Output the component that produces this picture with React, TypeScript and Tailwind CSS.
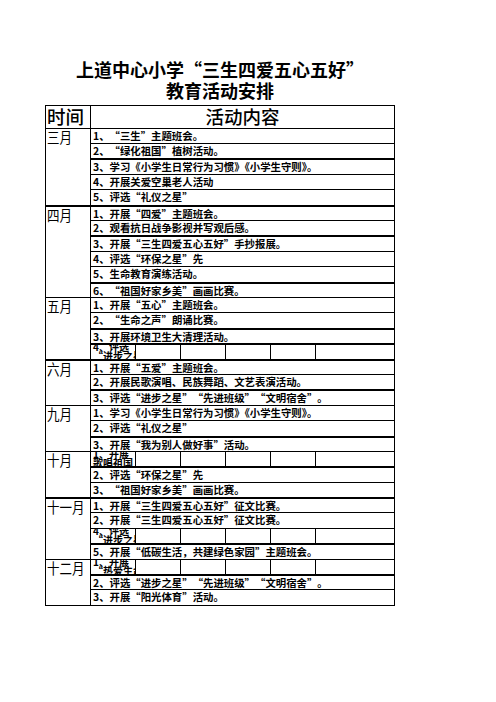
import React from 'react';

// ---------------------------------------------------------------------------
// Data
// ---------------------------------------------------------------------------

type Row = { text?: string; split?: [string, string]; thick?: boolean };
type Month = { label: string; thick?: boolean; rows: Row[] };

const MONTHS: Month[] = [
  {
    label: '三月',
    rows: [
      { text: '1、“三生”主题班会。' },
      { text: '2、“绿化祖国”植树活动。' },
      { text: '3、学习《小学生日常行为习惯》《小学生守则》。', thick: true },
      { text: '4、开展关爱空巢老人活动' },
      { text: '5、评选“礼仪之星”' },
    ],
  },
  {
    label: '四月',
    thick: true,
    rows: [
      { text: '1、开展“四爱”主题班会。' },
      { text: '2、观看抗日战争影视并写观后感。' },
      { text: '3、开展“三生四爱五心五好”手抄报展。', thick: true },
      { text: '4、评选“环保之星”先' },
      { text: '5、生命教育演练活动。' },
      { text: '6、“祖国好家乡美”画画比赛。', thick: true },
    ],
  },
  {
    label: '五月',
    rows: [
      { text: '1、开展“五心”主题班会。' },
      { text: '2、“生命之声”朗诵比赛。' },
      { text: '3、开展环境卫生大清理活动。', thick: true },
      { split: ['4、评选', '“进步之星”'], thick: true },
    ],
  },
  {
    label: '六月',
    thick: true,
    rows: [
      { text: '1、开展“五爱”主题班会。' },
      { text: '2、开展民歌演唱、民族舞蹈、文艺表演活动。' },
      { text: '3、评选“进步之星”“先进班级”“文明宿舍”。', thick: true },
    ],
  },
  {
    label: '九月',
    rows: [
      { text: '1、学习《小学生日常行为习惯》《小学生守则》。' },
      { text: '2、评选“礼仪之星”' },
      { text: '3、开展“我为别人做好事”活动。', thick: true },
    ],
  },
  {
    label: '十月',
    rows: [
      { split: ['1、开展', '歌唱祖国'] },
      { text: '2、评选“环保之星”先', thick: true },
      { text: '3、“祖国好家乡美”画画比赛。' },
    ],
  },
  {
    label: '十一月',
    thick: true,
    rows: [
      { text: '1、开展“三生四爱五心五好”征文比赛。' },
      { text: '2、开展“三生四爱五心五好”征文比赛。' },
      { split: ['4、评选', '“进步之星”'] },
      { text: '5、开展“低碳生活，共建绿色家园”主题班会。', thick: true },
    ],
  },
  {
    label: '十二月',
    rows: [
      { split: ['1、开展', '“热爱生命”'] },
      { text: '2、评选“进步之星”“先进班级”“文明宿舍”。', thick: true },
      { text: '3、开展“阳光体育”活动。' },
    ],
  },
];

const FONT = { fontFamily: '"Noto Sans CJK SC", "Noto Sans", sans-serif' };

// the font draws curly quotes half width; give each a full em box like the print
function Wide({ text }: { text: string }) {
  const parts = text.split(/([“”])/);
  return (
    <>
      {parts.map((p, i) =>
        p === '“' ? (
          <span key={i} className="inline-block w-[1em] text-right">
            {p}
          </span>
        ) : p === '”' ? (
          <span key={i} className="inline-block w-[1em] text-left">
            {p}
          </span>
        ) : (
          <React.Fragment key={i}>{p}</React.Fragment>
        ),
      )}
    </>
  );
}

// ---------------------------------------------------------------------------
// Rows
// ---------------------------------------------------------------------------

function ActivityRow({ row, top }: { row: Row; top: boolean }) {
  const border = top || row.thick ? 'border-t-2' : 'border-t';
  if (row.split) {
    return (
      <div className={`h-[15.4px] box-border ${border} border-black flex`}>
        <div className="w-[45px] border-r border-black overflow-hidden pl-[2px] text-[10px] leading-[9px] font-bold text-black whitespace-nowrap">
          <div className="-mt-[3px]">{row.split[0]}</div>
          <div>
            <Wide text={row.split[1]} />
          </div>
        </div>
        <div className="w-[45px] border-r border-black" />
        <div className="w-[45px] border-r border-black" />
        <div className="w-[45px] border-r border-black" />
        <div className="w-[45px] border-r border-black" />
        <div className="flex-1" />
      </div>
    );
  }
  return (
    <div
      className={`h-[15.4px] box-border ${border} border-black pl-[2px] text-[10.4px] leading-[13px] font-bold text-black whitespace-nowrap overflow-hidden`}
    >
      <Wide text={row.text ?? ''} />
    </div>
  );
}

function MonthGroup({ month, first }: { month: Month; first: boolean }) {
  const top = first ? 'border-t' : month.thick ? 'border-t-2' : 'border-t';
  return (
    <div className="flex">
      <div
        className={`w-[45px] shrink-0 box-border ${top} border-r border-black pl-[1px] text-[12.5px] leading-[14px] text-black whitespace-nowrap overflow-hidden`}
      >
        <span className="inline-block origin-top-left scale-y-[1.15]">{month.label}</span>
      </div>
      <div className="flex-1 flex flex-col">
        {month.rows.map((r, i) => (
          <ActivityRow key={i} row={r} top={i === 0 && !first && !!month.thick} />
        ))}
      </div>
    </div>
  );
}

// ---------------------------------------------------------------------------
// Page
// ---------------------------------------------------------------------------

export default function App() {
  return (
    <div className="w-[496px] h-[702px] bg-white pt-[59px]" style={FONT}>
      <div className="ml-[45px] w-[350px] text-center text-[18px] leading-[21px] font-bold text-black mb-[4px]">
        <div className="whitespace-nowrap">
          <Wide text="上道中心小学“三生四爱五心五好”" />
        </div>
        <div>教育活动安排</div>
      </div>

      <div className="ml-[45px] w-[350px] border-x border-b border-black">
        <div className="h-[22.7px] box-border border-t border-black flex text-[18.5px] leading-[21px] font-medium text-black">
          <div className="w-[45px] border-r border-black pl-[1px]">时间</div>
          <div className="flex-1 text-center">活动内容</div>
        </div>
        {MONTHS.map((m, i) => (
          <MonthGroup key={m.label} month={m} first={i === 0} />
        ))}
      </div>
    </div>
  );
}
